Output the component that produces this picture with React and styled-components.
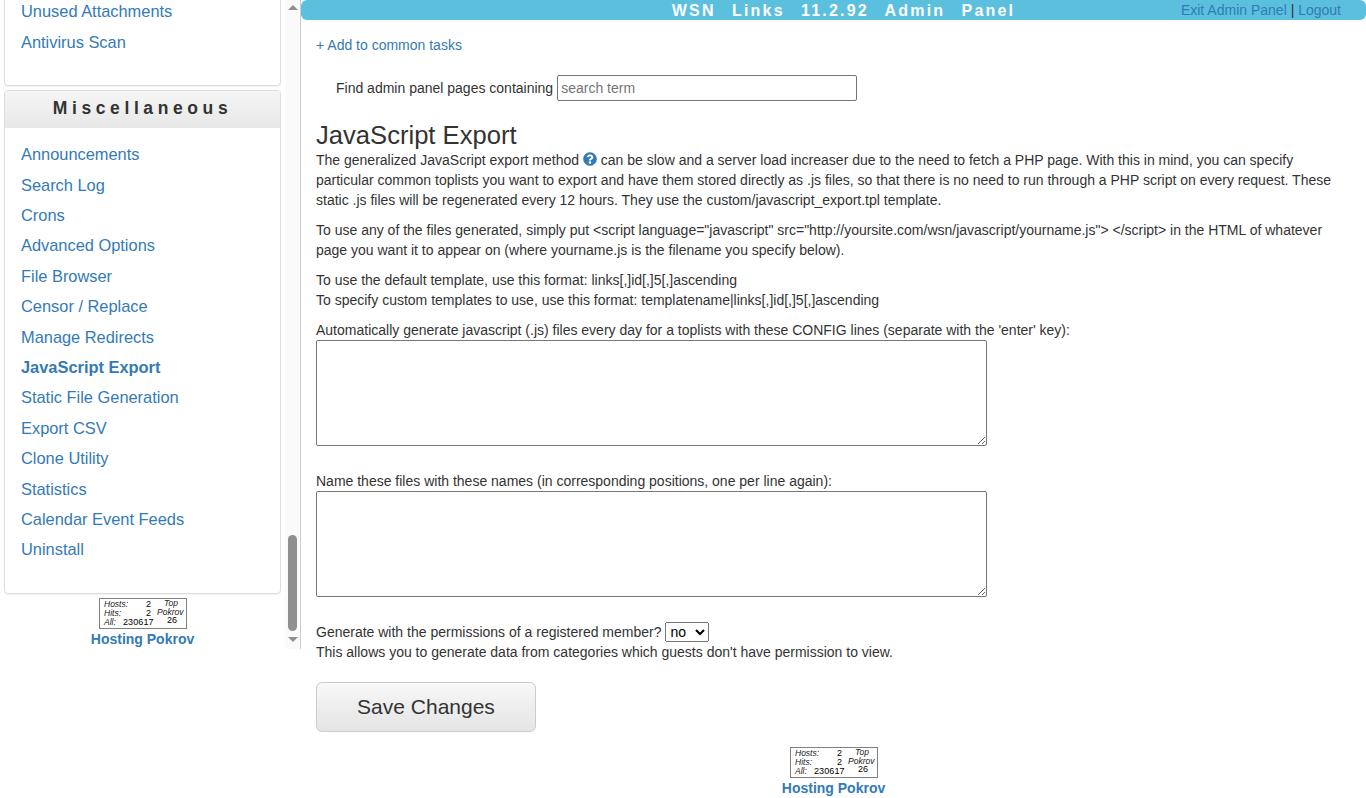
import styled, { createGlobalStyle } from "styled-components";
import { FaQuestionCircle } from "react-icons/fa";

const GlobalStyle = createGlobalStyle`
  html, body {
    margin: 0;
    padding: 0;
    background: #fff;
    overflow: hidden;
  }
  body {
    font-family: "Liberation Sans", Arial, sans-serif;
    font-size: 14px;
    line-height: 20px;
    color: #333;
  }
  a {
    color: #337ab7;
    text-decoration: none;
  }
`;

const Page = styled.div`
  display: flex;
  align-items: flex-start;
  height: 798px;
`;

const Sidebar = styled.aside`
  display: flex;
  flex: 0 0 301px;
  box-sizing: border-box;
  height: 649px;
  border-right: 1px solid #ccc;
`;

const SideContent = styled.div`
  display: flex;
  flex-direction: column;
  justify-content: flex-end;
  flex: 0 0 285px;
  height: 649px;
  overflow: hidden;
`;

const ScrollTrack = styled.div`
  display: flex;
  flex-direction: column;
  align-items: center;
  flex: 0 0 15px;
  background: #fafafa;
`;

const ArrowUp = styled.div`
  width: 0;
  height: 0;
  margin-top: 5px;
  border-left: 5px solid transparent;
  border-right: 5px solid transparent;
  border-bottom: 5px solid #8f8f8f;
`;

const ArrowDown = styled.div`
  width: 0;
  height: 0;
  margin: 6px 0 7px;
  border-left: 5px solid transparent;
  border-right: 5px solid transparent;
  border-top: 5px solid #8f8f8f;
`;

const Thumb = styled.div`
  width: 9px;
  height: 96px;
  margin-top: auto;
  border-radius: 5px;
  background: #8f8f8f;
`;

const Panel = styled.section`
  flex-shrink: 0;
  margin: 0 4px 4px;
  box-sizing: border-box;
  width: 277px;
  border: 1px solid #ddd;
  border-radius: 4px;
  background: #fff;
  box-shadow: 0 1px 1px rgba(0, 0, 0, 0.05);
`;

const PanelHeading = styled.h4`
  margin: 0;
  height: 37px;
  border-radius: 3px 3px 0 0;
  background: linear-gradient(to bottom, #f5f5f5, #e8e8e8);
  font-size: 17.5px;
  font-weight: bold;
  line-height: 35px;
  letter-spacing: 4.6px;
  text-align: center;
  color: #333;
`;

const NavList = styled.ul`
  margin: 0;
  padding: ${(p) => (p.$top ? "11.75px 16px 28.25px" : "0 16px 27.5px")};
  list-style: none;
`;

const NavItem = styled.li`
  height: 30.4px;
  font-size: 16.4px;
  line-height: 30.4px;
  white-space: nowrap;
`;

const NavLink = styled.a`
  font-weight: ${(p) => (p.$active ? "bold" : "normal")};
`;

const CounterBlock = styled.div`
  display: flex;
  flex-direction: column;
  align-items: center;
  flex-shrink: 0;
  width: ${(p) => (p.$side ? "285px" : "auto")};
  margin-top: ${(p) => (p.$side ? "0" : "15px")};
`;

const CounterBox = styled.svg`
  display: block;
  width: 88px;
  height: 31px;
`;

const HostLink = styled.a`
  font-weight: bold;
  line-height: 20px;
`;

const Main = styled.main`
  flex: 1;
  min-width: 0;
`;

const TopBar = styled.header`
  position: relative;
  height: 20px;
  border-radius: 6px;
  background: #5bc0de;
  line-height: 20px;
  text-align: center;
`;

const BarTitle = styled.span`
  display: inline-block;
  padding-left: 20px;
  font-size: 16px;
  font-weight: bold;
  line-height: 21px;
  letter-spacing: 2.2px;
  word-spacing: 9.6px;
  color: #fff;
`;

const BarLinks = styled.div`
  position: absolute;
  top: 0;
  right: 25px;
`;

const Content = styled.div`
  padding: 15px 15px 0;
`;

const SearchRow = styled.div`
  display: flex;
  align-items: center;
  gap: 4px;
  margin-top: 20px;
  padding-left: 20px;
`;

const SearchInput = styled.input`
  box-sizing: border-box;
  width: 300px;
  height: 26px;
  padding: 1px 3px;
  border: 1px solid #767676;
  border-radius: 2px;
  font-family: "Liberation Sans", Arial, sans-serif;
  font-size: 14px;
`;

const Title = styled.h3`
  margin: 19px 0 0;
  font-size: 25.6px;
  font-weight: normal;
  line-height: 30px;
  color: #333;
`;

const Para = styled.p`
  margin: 0 0 10px;
`;

const HelpIcon = styled(FaQuestionCircle)`
  width: 14px;
  height: 14px;
  color: #337ab7;
  vertical-align: -1px;
`;

const FieldLabel = styled.div`
  margin-top: ${(p) => p.$gap || "0"};
`;

const BigArea = styled.textarea`
  display: block;
  box-sizing: border-box;
  width: 671px;
  height: 106px;
  border: 1px solid #767676;
  border-radius: 2px;
`;

const PermRow = styled.div`
  margin-top: 25px;
`;

const PermSelect = styled.select`
  height: 20px;
  font-family: "Liberation Sans", Arial, sans-serif;
  font-size: 14px;
  vertical-align: top;
`;

const SaveButton = styled.button`
  display: block;
  box-sizing: border-box;
  width: 220px;
  height: 50px;
  margin-top: 20px;
  border: 1px solid #ccc;
  border-radius: 6px;
  background: linear-gradient(to bottom, #f8f8f8, #e4e4e4);
  font-family: "Liberation Sans", Arial, sans-serif;
  font-size: 21px;
  color: #333;
`;

const topItems = ["Unused Attachments", "Antivirus Scan"];

const miscItems = [
  "Announcements",
  "Search Log",
  "Crons",
  "Advanced Options",
  "File Browser",
  "Censor / Replace",
  "Manage Redirects",
  "JavaScript Export",
  "Static File Generation",
  "Export CSV",
  "Clone Utility",
  "Statistics",
  "Calendar Event Feeds",
  "Uninstall",
];

function Counter() {
  return (
    <CounterBox viewBox="0 0 88 31">
      <rect x="0.5" y="0.5" width="87" height="30" fill="#fff" stroke="#808080" />
      <g fontFamily="Liberation Sans, Arial, sans-serif" fontSize="8.5" fill="#222">
        <g fontStyle="italic">
          <text x="5" y="9">Hosts:</text>
          <text x="5" y="18">Hits:</text>
          <text x="5" y="27">All:</text>
          <text x="65" y="8">Top</text>
          <text x="58" y="17">Pokrov</text>
        </g>
        <g fontSize="9" fill="#000">
          <text x="47" y="9">2</text>
          <text x="47" y="18">2</text>
          <text x="24" y="27" letterSpacing="0.1">230617</text>
          <text x="68" y="25">26</text>
        </g>
      </g>
    </CounterBox>
  );
}

function App() {
  return (
    <>
      <GlobalStyle />
      <Page>
        <Sidebar>
          <SideContent>
            <Panel>
              <NavList>
                {topItems.map((item) => (
                  <NavItem key={item}>
                    <NavLink href="#">{item}</NavLink>
                  </NavItem>
                ))}
              </NavList>
            </Panel>
            <Panel>
              <PanelHeading>Miscellaneous</PanelHeading>
              <NavList $top>
                {miscItems.map((item) => (
                  <NavItem key={item}>
                    <NavLink href="#" $active={item === "JavaScript Export"}>
                      {item}
                    </NavLink>
                  </NavItem>
                ))}
              </NavList>
            </Panel>
            <CounterBlock $side>
              <Counter />
              <HostLink href="#">Hosting Pokrov</HostLink>
            </CounterBlock>
          </SideContent>
          <ScrollTrack>
            <ArrowUp />
            <Thumb />
            <ArrowDown />
          </ScrollTrack>
        </Sidebar>
        <Main>
          <TopBar>
            <BarTitle>WSN Links 11.2.92 Admin Panel</BarTitle>
            <BarLinks>
              <a href="#">Exit Admin Panel</a> | <a href="#">Logout</a>
            </BarLinks>
          </TopBar>
          <Content>
            <a href="#">+ Add to common tasks</a>
            <SearchRow>
              Find admin panel pages containing
              <SearchInput placeholder="search term" />
            </SearchRow>
            <Title>JavaScript Export</Title>
            <Para>
              The generalized JavaScript export method <HelpIcon /> can be slow and a server load
              increaser due to the need to fetch a PHP page. With this in mind, you can specify
              particular common toplists you want to export and have them stored directly as .js
              files, so that there is no need to run through a PHP script on every request. These
              static .js files will be regenerated every 12 hours. They use the
              custom/javascript_export.tpl template.
            </Para>
            <Para>
              To use any of the files generated, simply put &lt;script language="javascript"
              src="http://yoursite.com/wsn/javascript/yourname.js"&gt; &lt;/script&gt; in the HTML
              of whatever page you want it to appear on (where yourname.js is the filename you
              specify below).
            </Para>
            <Para>
              To use the default template, use this format: links[,]id[,]5[,]ascending
              <br />
              To specify custom templates to use, use this format:
              templatename|links[,]id[,]5[,]ascending
            </Para>
            <FieldLabel>
              Automatically generate javascript (.js) files every day for a toplists with these
              CONFIG lines (separate with the 'enter' key):
            </FieldLabel>
            <BigArea />
            <FieldLabel $gap="25px">
              Name these files with these names (in corresponding positions, one per line again):
            </FieldLabel>
            <BigArea />
            <PermRow>
              Generate with the permissions of a registered member?{" "}
              <PermSelect defaultValue="no">
                <option value="no">no</option>
                <option value="yes">yes</option>
              </PermSelect>
              <br />
              This allows you to generate data from categories which guests don't have permission
              to view.
            </PermRow>
            <SaveButton>Save Changes</SaveButton>
          </Content>
          <CounterBlock>
            <Counter />
            <HostLink href="#">Hosting Pokrov</HostLink>
          </CounterBlock>
        </Main>
      </Page>
    </>
  );
}

export default App;
